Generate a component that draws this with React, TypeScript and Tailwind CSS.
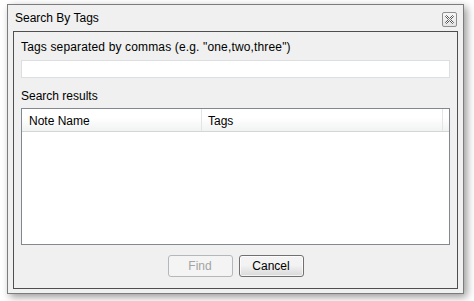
import React, { useState } from 'react';

const font = { fontFamily: '"Liberation Sans", Arial, sans-serif' };

function CloseIcon() {
  return (
    <svg width="9" height="9" viewBox="0 0 9 9">
      <path
        d="M0.5 1.5 L1.5 0.5 L4.5 3.5 L7.5 0.5 L8.5 1.5 L5.5 4.5 L8.5 7.5 L7.5 8.5 L4.5 5.5 L1.5 8.5 L0.5 7.5 L3.5 4.5 Z"
        fill="#ffffff"
        stroke="#555"
        strokeWidth="1"
        strokeLinejoin="round"
      />
    </svg>
  );
}

export default function App() {
  const [tags, setTags] = useState('');

  return (
    <div className="w-[474px] h-[301px] bg-white pt-[4px] pl-[7px] overflow-hidden" style={font}>
      <div className="w-[457px] h-[290px] flex flex-col border border-[#7c7c7c] bg-[#eff0ef] shadow-[3px_3px_8px_rgba(0,0,0,0.4)] px-[5px] pb-[4px]">
        <div className="h-[26px] flex items-start justify-between shrink-0">
          <span className="pl-[2px] pt-[6px] text-[12px] leading-[15px] text-black">Search By Tags</span>
          <button className="mt-[7px] mr-[1px] w-[15px] h-[15px] rounded-[2px] border border-[#8d8f91] bg-gradient-to-b from-[#f7f7f7] to-[#e4e4e4] flex items-center justify-center">
            <CloseIcon />
          </button>
        </div>

        <div className="flex-1 flex flex-col border border-[#4f4f4f] bg-[#eff0ef] px-[7px] pt-[8px] text-[12px] leading-[15px] text-black">
          <label className="tracking-[0.15px]">Tags separated by commas (e.g. "one,two,three")</label>
          <input
            value={tags}
            onChange={(e) => setTags(e.target.value)}
            className="mt-[5px] h-[18px] w-full bg-white border border-[#dcdfe2] outline-none px-1 text-[12px]"
          />

          <div className="mt-[11px]">Search results</div>

          <div className="mt-[4px] h-[137px] border border-[#828790] bg-white flex flex-col">
            <div className="h-[23px] flex border-b border-[#d5d5d5] bg-gradient-to-b from-white from-40% to-[#f1f2f2]">
              <div className="w-[180px] pl-[7px] pt-[3px] flex items-center border-r border-[#e3e4e5]">Note Name</div>
              <div className="w-[241px] pl-[6px] pt-[3px] flex items-center border-r border-[#e3e4e5]">Tags</div>
              <div className="flex-1" />
            </div>
            <div className="flex-1" />
          </div>

          <div className="mt-[10px] flex justify-center gap-[6px]">
            <button
              disabled
              className="w-[65px] h-[22px] rounded-[3px] border border-[#b5b8bb] bg-[#f4f4f4] text-[#a3a3a3] text-[12px]"
            >
              Find
            </button>
            <button className="w-[65px] h-[22px] rounded-[3px] border border-[#707070] bg-gradient-to-b from-[#f3f3f3] from-45% to-[#d9d9d9] text-black text-[12px] shadow-[inset_0_0_0_1px_rgba(255,255,255,0.7)]">
              Cancel
            </button>
          </div>
        </div>
      </div>
    </div>
  );
}
